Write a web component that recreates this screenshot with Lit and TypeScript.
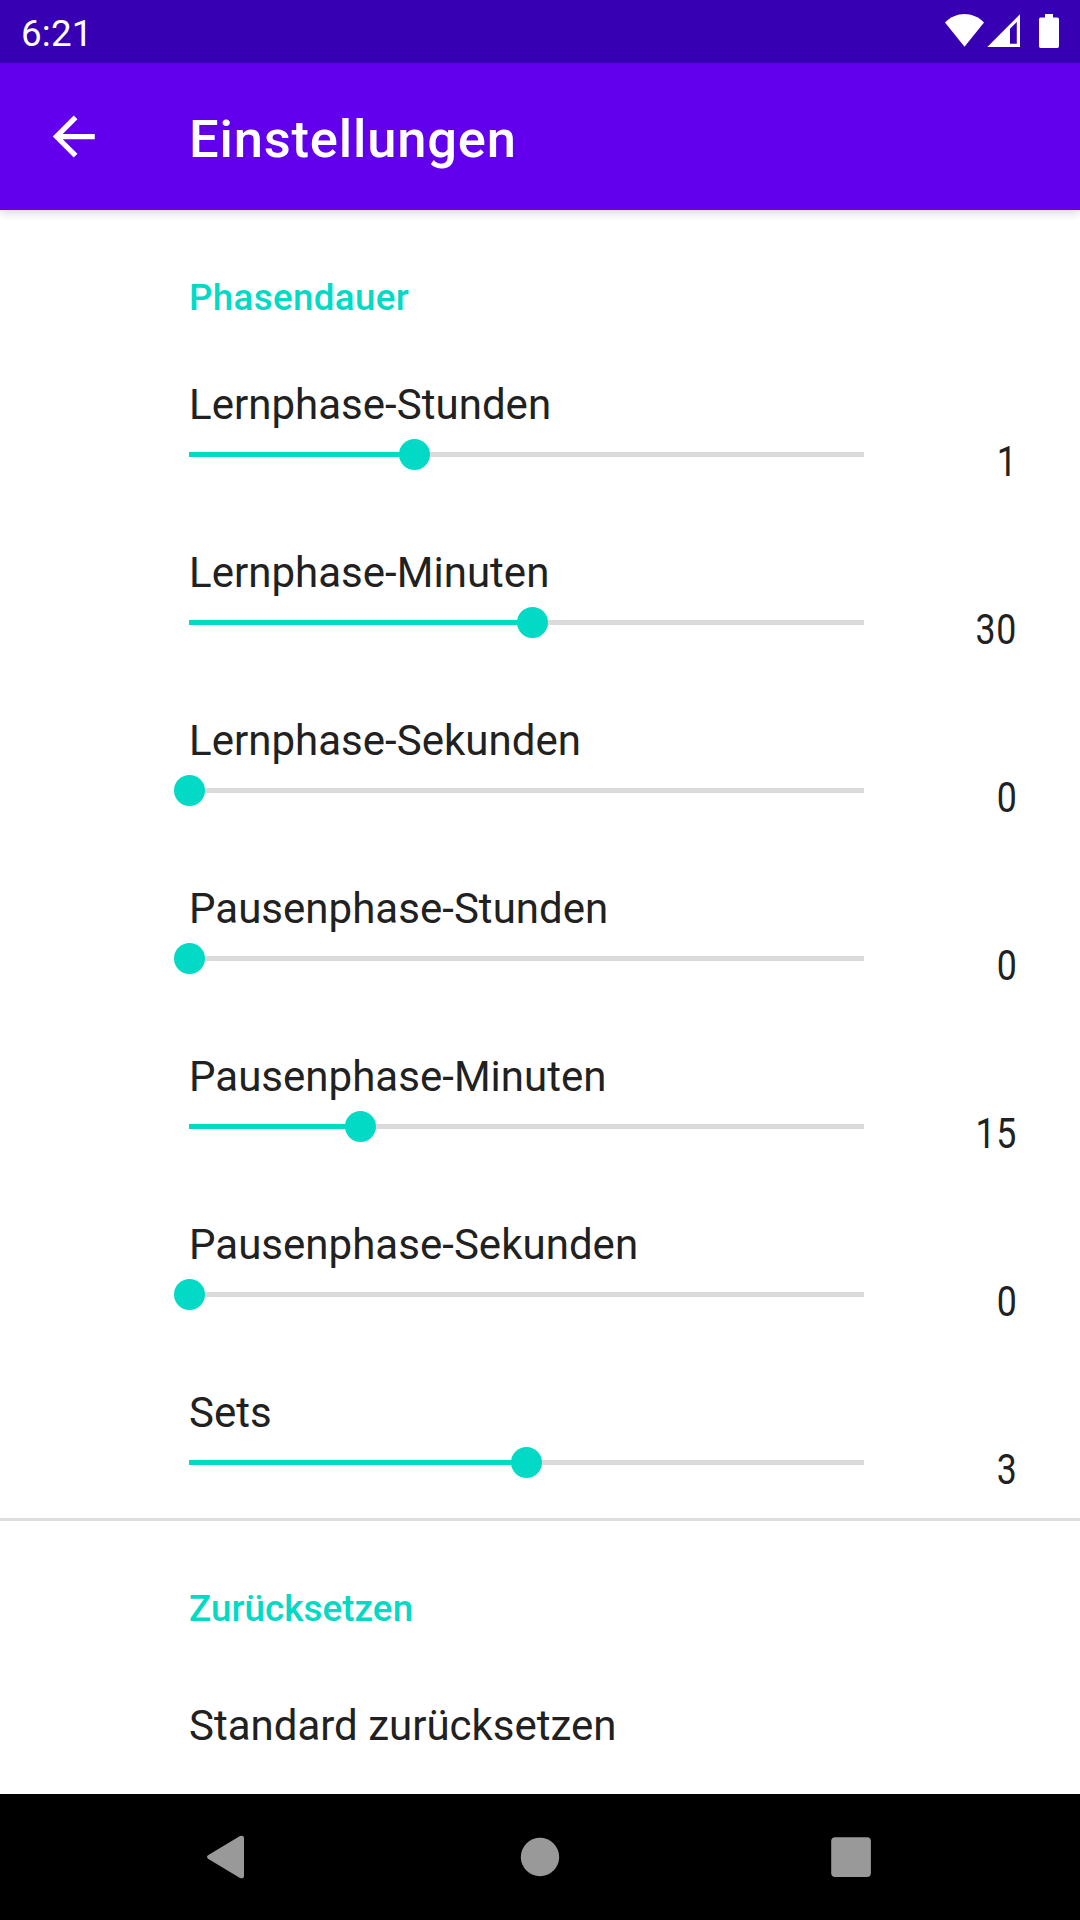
import { LitElement, html, css, svg } from "lit";
import { customElement, property } from "lit/decorators.js";

interface Setting {
  label: string;
  value: number;
  min: number;
  max: number;
}

const settings: Setting[] = [
  { label: "Lernphase-Stunden", value: 1, min: 0, max: 3 },
  { label: "Lernphase-Minuten", value: 30, min: 0, max: 59 },
  { label: "Lernphase-Sekunden", value: 0, min: 0, max: 59 },
  { label: "Pausenphase-Stunden", value: 0, min: 0, max: 3 },
  { label: "Pausenphase-Minuten", value: 15, min: 0, max: 59 },
  { label: "Pausenphase-Sekunden", value: 0, min: 0, max: 59 },
  { label: "Sets", value: 3, min: 1, max: 5 },
];

@customElement("slider-row")
class SliderRow extends LitElement {
  @property() label = "";
  @property({ type: Number }) value = 0;
  @property({ type: Number }) min = 0;
  @property({ type: Number }) max = 100;

  static styles = css`
    :host {
      display: flex;
      justify-content: space-between;
      box-sizing: border-box;
      height: 168px;
      padding: 38px 62.5px 0 189px;
    }
    .main {
      width: 675px;
    }
    .label {
      font-size: 42px;
      line-height: 50px;
      letter-spacing: 0.03px;
      white-space: nowrap;
    }
    .slider {
      position: relative;
      display: flex;
      align-items: center;
      height: 31px;
      margin-top: 9px;
    }
    .track {
      flex: 1;
      height: 5px;
      background: #dadada;
    }
    .fill {
      height: 5px;
      background: #03dac5;
    }
    .thumb {
      position: absolute;
      top: 0;
      width: 31px;
      height: 31px;
      margin-left: -15.25px;
      border-radius: 50%;
      background: #03dac5;
    }
    .value {
      margin-top: 57px;
      font-size: 42px;
      line-height: 50px;
      letter-spacing: 1px;
      transform: scaleX(0.85);
      transform-origin: right;
    }
  `;

  render() {
    const percent = ((this.value - this.min) / (this.max - this.min)) * 100;
    return html`
      <div class="main">
        <div class="label">${this.label}</div>
        <div class="slider">
          <div class="track">
            <div class="fill" style="width:${percent}%"></div>
          </div>
          <div class="thumb" style="left:${percent}%"></div>
        </div>
      </div>
      <div class="value">${this.value}</div>
    `;
  }
}

@customElement("app-root")
class AppRoot extends LitElement {
  static styles = css`
    :host {
      display: flex;
      flex-direction: column;
      width: 1080px;
      height: 1920px;
      overflow: hidden;
      background: #fff;
      color: #212121;
      font-family: Roboto, "Liberation Sans", sans-serif;
    }
    svg {
      display: block;
    }
    .status {
      flex: none;
      display: flex;
      justify-content: space-between;
      box-sizing: border-box;
      height: 63px;
      padding: 0 16px 0 21px;
      background: #3700b3;
      color: #fff;
      z-index: 2;
    }
    .clock {
      padding-top: 4px;
      font-size: 36.75px;
      line-height: 59px;
      letter-spacing: 0.2px;
    }
    .appbar {
      flex: none;
      display: flex;
      align-items: center;
      box-sizing: border-box;
      height: 147px;
      padding-left: 42px;
      background: #6200ee;
      color: #fff;
      box-shadow: 0 2px 10px rgba(0, 0, 0, 0.18);
      z-index: 1;
    }
    .title {
      margin: 5px 0 0 84px;
      font-size: 52.5px;
      font-weight: 500;
      line-height: 62px;
      letter-spacing: 0.82px;
    }
    .content {
      flex: 1;
      min-height: 0;
      overflow: hidden;
    }
    .heading {
      padding: 63px 0 19px 189px;
      color: #03dac5;
      font-size: 36.75px;
      font-weight: 500;
      line-height: 50px;
      letter-spacing: 0.08px;
    }
    .durations {
      letter-spacing: 0.33px;
    }
    .reset {
      border-top: 3px solid #dedede;
    }
    .action {
      padding: 48px 0 0 189px;
      font-size: 42px;
      line-height: 50px;
    }
    .nav {
      flex: none;
      display: flex;
      align-items: center;
      justify-content: space-between;
      box-sizing: border-box;
      height: 126px;
      padding: 0 198px;
      background: #000;
      color: #999;
    }
  `;

  render() {
    return html`
      <div class="status">
        <div class="clock">6:21</div>
        <svg width="124" height="63" viewBox="940 0 124 63" fill="#fff">
          ${svg`
            <path d="M964.5 46.7L945 22.6C950.5 17 957.5 14.1 964.5 14.1S978.5 17 984 22.6Z" />
            <path fill-rule="evenodd" d="M1020 14.3V47H987.3ZM1016.8 22L1010 28.8V43.8H1016.8Z" />
            <path d="M1045 14H1053V17.5H1057.3Q1059 17.5 1059 19.2V46.2Q1059 48 1057.3 48H1040.7Q1039 48 1039 46.2V19.2Q1039 17.5 1040.7 17.5H1045Z" />
          `}
        </svg>
      </div>
      <div class="appbar">
        <svg width="63" height="63" viewBox="0 0 24 24" fill="#fff">
          <path d="M20.1 11H7.9l5.6-5.6L12.1 4l-8 8 8 8 1.4-1.4L7.9 13h12.2z" />
        </svg>
        <div class="title">Einstellungen</div>
      </div>
      <div class="content">
        <div class="heading durations">Phasendauer</div>
        ${settings.map(
          (s) => html`<slider-row
            .label=${s.label}
            .value=${s.value}
            .min=${s.min}
            .max=${s.max}
          ></slider-row>`
        )}
        <div class="reset">
          <div class="heading">Zurücksetzen</div>
          <div class="action">Standard zurücksetzen</div>
        </div>
      </div>
      <div class="nav">
        <svg width="56" height="56" viewBox="198 1829 56 56" fill="currentColor">
          <path d="M208 1855.3L240 1836.1Q244 1834.5 244 1838.5V1875.5Q244 1879.5 240 1877.9L208 1858.7Q206 1857 208 1855.3Z" />
        </svg>
        <svg width="56" height="56" viewBox="0 0 56 56" fill="currentColor">
          <circle cx="28" cy="28" r="19.2" />
        </svg>
        <svg width="56" height="56" viewBox="0 0 56 56" fill="currentColor">
          <rect x="5.2" y="8.2" width="39.7" height="39.7" rx="4" />
        </svg>
      </div>
    `;
  }
}
